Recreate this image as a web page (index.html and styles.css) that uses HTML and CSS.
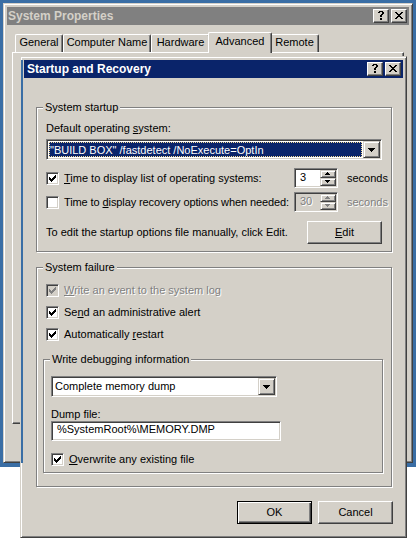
FILE: index.html
```html
<!DOCTYPE html>
<html>
<head>
<meta charset="utf-8">
<title>Startup and Recovery</title>
<link rel="stylesheet" href="styles.css">
</head>
<body>
<div class="screen">
  <div class="desktop">
    <div class="win bgwin">
      <div class="titlebar inactive">
        <span class="title">System Properties</span>
        <span class="tbtns">
          <span class="tbtn help"><svg width="6" height="9" viewBox="0 0 6 9"><path d="M1 0h4v1H1zM0 1h2v1H0zM4 1h2v2H4zM3 3h2v1H3zM2 4h2v2H2zM2 7h2v2H2z" fill="#000"/></svg></span>
          <span class="tbtn close"><svg width="8" height="7" viewBox="0 0 8 7"><path d="M0 0h2v1H0zM6 0h2v1H6zM1 1h2v1H1zM5 1h2v1H5zM2 2h4v1H2zM3 3h2v1H3zM2 4h4v1H2zM1 5h2v1H1zM5 5h2v1H5zM0 6h2v1H0zM6 6h2v1H6z" fill="#000"/></svg></span>
        </span>
      </div>
      <div class="tabrow">
        <div class="tab w-general">General</div>
        <div class="tab w-cname">Computer Name</div>
        <div class="tab w-hw">Hardware</div>
        <div class="tab tab-sel w-adv">Advanced</div>
        <div class="tab w-remote">Remote</div>
      </div>
      <div class="tabpanel"></div>
    </div>
  </div>

  <div class="win dialog">
    <div class="titlebar">
      <span class="title">Startup and Recovery</span>
      <span class="tbtns">
        <span class="tbtn help"><svg width="6" height="9" viewBox="0 0 6 9"><path d="M1 0h4v1H1zM0 1h2v1H0zM4 1h2v2H4zM3 3h2v1H3zM2 4h2v2H2zM2 7h2v2H2z" fill="#000"/></svg></span>
        <span class="tbtn close"><svg width="8" height="7" viewBox="0 0 8 7"><path d="M0 0h2v1H0zM6 0h2v1H6zM1 1h2v1H1zM5 1h2v1H5zM2 2h4v1H2zM3 3h2v1H3zM2 4h4v1H2zM1 5h2v1H1zM5 5h2v1H5zM0 6h2v1H0zM6 6h2v1H6z" fill="#000"/></svg></span>
      </span>
    </div>

    <div class="dlg-body">
      <fieldset class="group">
        <legend>System startup</legend>
        <div class="startup-in">
          <div class="lbl">Default operating <u>s</u>ystem:</div>
          <div class="combo combo-os">
            <div class="combo-val focus"><span class="combo-sel">"BUILD BOX" /fastdetect /NoExecute=OptIn</span></div>
            <span class="dd-btn"><svg width="7" height="4" viewBox="0 0 7 4"><path d="M0 0h7v1H0zM1 1h5v1H1zM2 2h3v1H2zM3 3h1v1H3z" fill="#000"/></svg></span>
          </div>
          <div class="timegrid">
            <div class="check">
              <span class="cb"><svg width="7" height="7" viewBox="0 0 7 7"><path d="M0 2h1v3H0zM1 3h1v3H1zM2 4h1v3H2zM3 3h1v3H3zM4 2h1v3H4zM5 1h1v3H5zM6 0h1v3H6z" fill="#000"/></svg></span>
              <span><u>T</u>ime to display list of operating systems:</span>
            </div>
            <div class="spin">
              <span class="spin-val">3</span>
              <span class="spin-btns">
                <span class="spin-btn"><svg width="5" height="3" viewBox="0 0 5 3"><path d="M2 0h1v1H2zM1 1h3v1H1zM0 2h5v1H0z" fill="#000"/></svg></span>
                <span class="spin-btn"><svg width="5" height="3" viewBox="0 0 5 3"><path d="M0 0h5v1H0zM1 1h3v1H1zM2 2h1v1H2z" fill="#000"/></svg></span>
              </span>
            </div>
            <span class="unit">seconds</span>

            <div class="check">
              <span class="cb"></span>
              <span class="tight">Time to <u>d</u>isplay recovery options when needed:</span>
            </div>
            <div class="spin disabled">
              <span class="spin-val dis">30</span>
              <span class="spin-btns">
                <span class="spin-btn"><svg width="5" height="3" viewBox="0 0 5 3"><path d="M2 0h1v1H2zM1 1h3v1H1zM0 2h5v1H0z" fill="#808080"/></svg></span>
                <span class="spin-btn"><svg width="5" height="3" viewBox="0 0 5 3"><path d="M0 0h5v1H0zM1 1h3v1H1zM2 2h1v1H2z" fill="#808080"/></svg></span>
              </span>
            </div>
            <span class="unit dis">seconds</span>
          </div>
          <div class="editrow">
            <span>To edit the startup options file manually, click Edit.</span>
            <span class="btn"><span><u>E</u>dit</span></span>
          </div>
        </div>
      </fieldset>

      <fieldset class="group g-failure">
        <legend>System failure</legend>
        <div class="failure-in">
          <div class="checks">
            <div class="check dis-check">
              <span class="cb cb-dis"><svg width="7" height="7" viewBox="0 0 7 7"><path d="M0 2h1v3H0zM1 3h1v3H1zM2 4h1v3H2zM3 3h1v3H3zM4 2h1v3H4zM5 1h1v3H5zM6 0h1v3H6z" fill="#808080"/></svg></span>
              <span class="dis"><u>W</u>rite an event to the system log</span>
            </div>
            <div class="check">
              <span class="cb"><svg width="7" height="7" viewBox="0 0 7 7"><path d="M0 2h1v3H0zM1 3h1v3H1zM2 4h1v3H2zM3 3h1v3H3zM4 2h1v3H4zM5 1h1v3H5zM6 0h1v3H6z" fill="#000"/></svg></span>
              <span>Se<u>n</u>d an administrative alert</span>
            </div>
            <div class="check">
              <span class="cb"><svg width="7" height="7" viewBox="0 0 7 7"><path d="M0 2h1v3H0zM1 3h1v3H1zM2 4h1v3H2zM3 3h1v3H3zM4 2h1v3H4zM5 1h1v3H5zM6 0h1v3H6z" fill="#000"/></svg></span>
              <span>Automatically <u>r</u>estart</span>
            </div>
          </div>

          <fieldset class="group g-debug">
            <legend>Write debugging information</legend>
            <div class="debug-in">
              <div class="combo combo-dump">
                <div class="combo-val"><span>Complete memory dump</span></div>
                <span class="dd-btn"><svg width="7" height="4" viewBox="0 0 7 4"><path d="M0 0h7v1H0zM1 1h5v1H1zM2 2h3v1H2zM3 3h1v1H3z" fill="#000"/></svg></span>
              </div>
              <div class="lbl dump-lbl">Dump file:</div>
              <div class="textbox">%SystemRoot%\MEMORY.DMP</div>
              <div class="check overwrite">
                <span class="cb"><svg width="7" height="7" viewBox="0 0 7 7"><path d="M0 2h1v3H0zM1 3h1v3H1zM2 4h1v3H2zM3 3h1v3H3zM4 2h1v3H4zM5 1h1v3H5zM6 0h1v3H6z" fill="#000"/></svg></span>
                <span><u>O</u>verwrite any existing file</span>
              </div>
            </div>
          </fieldset>
        </div>
      </fieldset>

      <div class="btnrow">
        <span class="btn btn-default"><span>OK</span></span>
        <span class="btn"><span>Cancel</span></span>
      </div>
    </div>
  </div>
</div>
</body>
</html>
```

FILE: styles.css
```css
* { box-sizing: border-box; }

html, body {
  margin: 0;
  padding: 0;
  background: #ffffff;
}

body {
  font-family: "Liberation Sans", Arial, sans-serif;
  font-size: 11px;
  line-height: 13px;
  color: #000000;
}

u { text-decoration: underline; text-underline-offset: 1px; }

.screen {
  position: relative;
  width: 419px;
  height: 541px;
  overflow: hidden;
}

.desktop {
  position: relative;
  width: 416px;
  height: 467px;
  background: #3a6ea5;
}

/* ---------- windows ---------- */
.win {
  position: absolute;
  display: flex;
  flex-direction: column;
  background: #d4d0c8;
  border: 1px solid;
  border-color: #d4d0c8 #404040 #404040 #d4d0c8;
  box-shadow: inset 1px 1px 0 #ffffff, inset -1px -1px 0 #808080;
  padding: 3px;
}

.bgwin {
  left: 3px;
  top: 3px;
  width: 410px;
  height: 460px;
}

.dialog {
  left: 20px;
  top: 56px;
  width: 387px;
  height: 482px;
}

.dialog::before {
  content: "";
  position: absolute;
  left: 0;
  top: 3px;
  width: 2px;
  height: 403px;
  background: #3a6ea5;
}

.titlebar {
  flex: none;
  height: 18px;
  display: flex;
  align-items: flex-start;
  justify-content: space-between;
  padding: 0 2px 0 3px;
  background: #0a246a;
  color: #ffffff;
  font-weight: bold;
  font-size: 12px;
}

.titlebar .title { line-height: 18px; }

.titlebar.inactive {
  background: #808080;
  color: #d4d0c8;
  padding-left: 1px;
}

.tbtns {
  display: flex;
  gap: 2px;
  padding-top: 2px;
}

.tbtn {
  display: block;
  width: 16px;
  height: 14px;
  background: #d4d0c8;
  border: 1px solid;
  border-color: #ffffff #404040 #404040 #ffffff;
  box-shadow: inset -1px -1px 0 #808080;
}

.tbtn svg { display: block; }
.tbtn.help svg { margin: 1px 0 0 4px; }
.tbtn.close svg { margin: 2px 0 0 3px; }

/* ---------- tabs (background window) ---------- */
.tabrow {
  flex: none;
  display: flex;
  align-items: flex-end;
  height: 20px;
  margin: 7px 0 0 8px;
  position: relative;
  z-index: 1;
}

.tab {
  height: 18px;
  padding-top: 1px;
  text-align: center;
  background: #d4d0c8;
  border: 1px solid;
  border-bottom: 0;
  border-color: #ffffff #404040 #ffffff #ffffff;
  box-shadow: inset -1px 0 0 #808080;
  border-radius: 2px 2px 0 0;
  white-space: nowrap;
}

.w-general { width: 48px; }
.w-cname { width: 88px; }
.w-hw { width: 59px; }
.w-remote { width: 49px; }

.tab-sel {
  width: 64px;
  height: 21px;
  margin: 0 -2px -1px;
  padding-top: 2px;
  position: relative;
  z-index: 2;
}

.tabpanel {
  flex: none;
  height: 372px;
  margin: 0 5px;
  border: 1px solid;
  border-color: #ffffff #404040 #404040 #ffffff;
  box-shadow: inset -1px -1px 0 #808080;
}

/* ---------- dialog body ---------- */
.dlg-body {
  display: flex;
  flex-direction: column;
  padding: 23px 11px 10px 12px;
}

.group {
  margin: 0;
  padding: 0;
  min-width: 0;
  border: 1px solid #808080;
  box-shadow: inset 1px 1px 0 #ffffff, 1px 1px 0 #ffffff;
}

.group legend {
  margin-left: 6px;
  padding: 0 2px;
  line-height: 13px;
  background: #d4d0c8;
}

.startup-in {
  padding: 8px 9px 7px 9px;
}

.lbl { line-height: 13px; }

/* combobox */
.combo {
  display: flex;
  height: 21px;
  margin-top: 4px;
  background: #ffffff;
  border: 1px solid;
  border-color: #808080 #ffffff #ffffff #808080;
  box-shadow: inset 1px 1px 0 #404040, inset -1px -1px 0 #d4d0c8;
  padding: 1px;
}

.combo-val {
  flex: 1;
  min-width: 0;
  display: flex;
  align-items: center;
  padding-left: 2px;
  white-space: nowrap;
  overflow: hidden;
}

.combo-val.focus {
  padding: 1px;
}

.combo-sel {
  flex: 1;
  align-self: stretch;
  display: flex;
  align-items: center;
  padding-left: 1px;
  padding-top: 1px;
  background: #0a246a;
  color: #ffffff;
  outline: 1px dotted #f5db95;
  outline-offset: -1px;
}

.dd-btn {
  display: block;
  flex: none;
  width: 17px;
  height: 17px;
  background: #d4d0c8;
  border: 1px solid;
  border-color: #d4d0c8 #404040 #404040 #d4d0c8;
  box-shadow: inset 1px 1px 0 #ffffff, inset -1px -1px 0 #808080;
}

.dd-btn svg { display: block; margin: 6px 0 0 4px; }

/* time rows */
.timegrid {
  display: grid;
  grid-template-columns: 248px 44px max-content;
  grid-auto-rows: 20px;
  row-gap: 4px;
  align-items: center;
  margin-top: 8px;
}

.check {
  display: flex;
  align-items: center;
  gap: 5px;
  white-space: nowrap;
}

.tight { letter-spacing: -0.1px; }

.cb {
  display: block;
  flex: none;
  width: 13px;
  height: 13px;
  background: #ffffff;
  border: 1px solid;
  border-color: #808080 #ffffff #ffffff #808080;
  box-shadow: inset 1px 1px 0 #404040, inset -1px -1px 0 #d4d0c8;
  padding: 2px;
}

.cb svg { display: block; }
.cb-dis { background: #d4d0c8; }

.dis {
  color: #808080;
  text-shadow: 1px 1px 0 #ffffff;
}

/* spinner */
.spin {
  display: flex;
  height: 20px;
  background: #ffffff;
  border: 1px solid;
  border-color: #808080 #ffffff #ffffff #808080;
  box-shadow: inset 1px 1px 0 #404040, inset -1px -1px 0 #d4d0c8;
  padding: 1px;
}

.spin.disabled { background: #d4d0c8; }

.spin-val {
  flex: 1;
  padding: 1px 0 0 4px;
  line-height: 13px;
}

.spin-btns {
  display: flex;
  flex-direction: column;
  width: 16px;
}

.spin-btn {
  display: block;
  height: 8px;
  background: #d4d0c8;
  border: 1px solid;
  border-color: #d4d0c8 #404040 #404040 #d4d0c8;
  box-shadow: inset 1px 1px 0 #ffffff, inset -1px -1px 0 #808080;
}

.spin-btn svg { display: block; margin: 1px 0 0 4px; }

.unit {
  white-space: nowrap;
  margin-left: 9px;
}

.editrow {
  display: flex;
  align-items: center;
  justify-content: space-between;
  margin-top: 9px;
}

/* push buttons */
.btn {
  display: flex;
  align-items: center;
  justify-content: center;
  flex: none;
  width: 75px;
  height: 23px;
  background: #d4d0c8;
  border: 1px solid;
  border-color: #ffffff #404040 #404040 #ffffff;
  box-shadow: inset -1px -1px 0 #808080;
}

.btn-default {
  border-color: #000000;
  box-shadow: inset 1px 1px 0 #ffffff, inset -1px -1px 0 #404040, inset -2px -2px 0 #808080;
}

/* system failure */
.g-failure { margin-top: 9px; }

.failure-in {
  padding: 10px 8px 13px 6px;
}

.checks {
  display: flex;
  flex-direction: column;
  gap: 9px;
  margin-left: 3px;
}

.g-debug { margin-top: 12px; }

.debug-in {
  padding: 10px 0 6px 7px;
}

.combo-dump {
  width: 226px;
  margin-top: 0;
}

.dump-lbl { margin-top: 11px; }

.textbox {
  width: 230px;
  height: 20px;
  background: #ffffff;
  border: 1px solid;
  border-color: #808080 #ffffff #ffffff #808080;
  box-shadow: inset 1px 1px 0 #404040, inset -1px -1px 0 #d4d0c8;
  padding: 1px 0 0 5px;
  line-height: 13px;
  white-space: nowrap;
}

.overwrite { margin-top: 12px; }

.btnrow {
  display: flex;
  justify-content: flex-end;
  gap: 6px;
  margin: 14px -1px 0 0;
}
```
